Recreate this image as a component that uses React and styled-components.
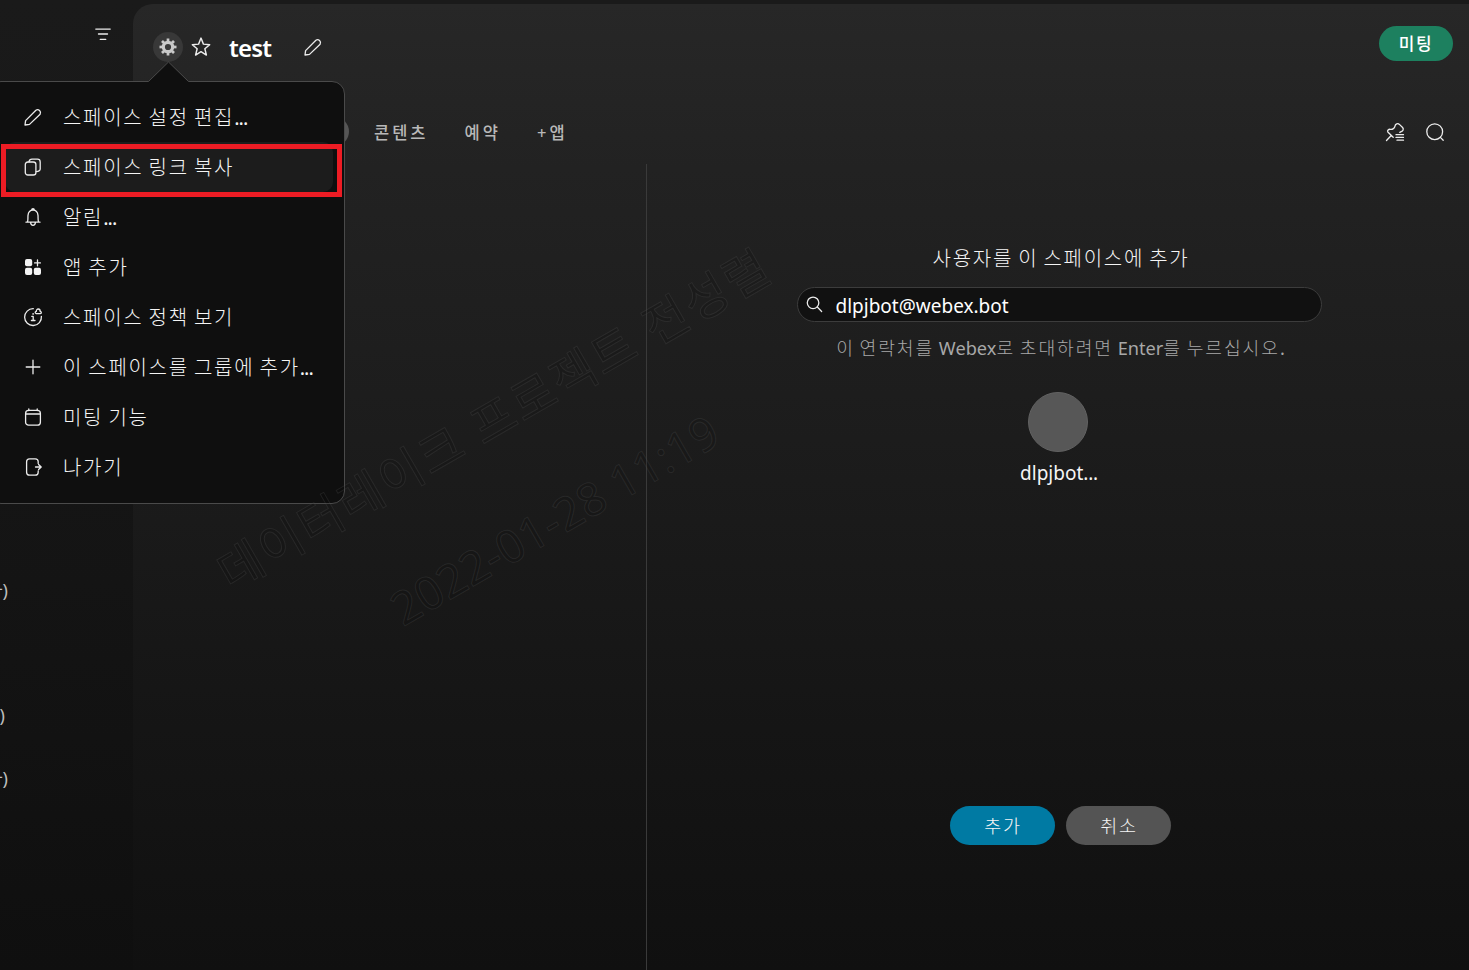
import React from 'react';
import styled, { createGlobalStyle, css } from 'styled-components';

const GlobalStyle = createGlobalStyle`
  * { box-sizing: border-box; }
  html, body, #root { height: 100%; }
  body {
    margin: 0;
    overflow: hidden;
    background: #191919;
    color: #f5f5f5;
    font-family: 'Noto Sans', 'Noto Sans CJK KR', sans-serif;
  }
  button, input { font: inherit; color: inherit; border: 0; padding: 0; background: none; }
`;

const Window = styled.div`
  position: relative;
  display: flex;
  width: 100%;
  height: 970px;
  padding-top: 4px;
  overflow: hidden;
  background: linear-gradient(#1a1a1a, #191919 15%, #141414 60%, #0f0f0f);
`;

const Sidebar = styled.aside`
  display: flex;
  flex-direction: column;
  width: 133px;
  flex: none;
`;

const FilterBar = styled.div`
  display: flex;
  justify-content: flex-end;
  padding: 21px 21px 0 0;
  height: 564px;
`;

const ListTail = styled.div`
  height: ${(p) => p.$height}px;
  margin-left: ${(p) => p.$offset}px;
  font-size: 18px;
  line-height: 44px;
  color: #bdbdbd;
  white-space: nowrap;
`;

const Main = styled.main`
  display: flex;
  flex-direction: column;
  flex: 1;
  border-top-left-radius: 20px;
  background: linear-gradient(#272727, #222 17%, #1c1c1c 45%, #151515 75%, #101010);
`;

const Header = styled.header`
  display: flex;
  align-items: center;
  height: 86px;
  padding: 0 16px 0 20px;
`;

const SettingsButton = styled.button`
  display: grid;
  place-items: center;
  width: 30px;
  height: 30px;
  border-radius: 50%;
  background: #383838;
`;

const StarButton = styled.button`
  display: grid;
  margin-left: 6.5px;
`;

const Title = styled.h1`
  width: 74px;
  margin: 2px 0 0 17.5px;
  font-size: 24px;
  font-weight: 600;
  line-height: 30px;
  letter-spacing: -0.8px;
  color: #fff;
`;

const EditButton = styled.button`
  display: grid;
`;

const MeetButton = styled.button`
  width: 74px;
  height: 35px;
  margin: -7px 0 0 auto;
  border-radius: 18px;
  background: #1d805f;
  font-size: 17px;
  font-weight: 500;
  line-height: 35px;
  color: #fff;
`;

const TabBar = styled.nav`
  display: flex;
  align-items: center;
  height: 74px;
  padding: 0 23px 0 156px;
`;

const ActiveTab = styled.span`
  width: 60px;
  height: 29px;
  margin-top: 9px;
  border-radius: 15px;
  background: #555;
`;

const Tab = styled.span`
  margin: 11px 0 0 ${(p) => p.$gap}px;
  font-size: 16.5px;
  font-weight: 500;
  line-height: 24px;
  color: #b8b8b8;
  white-space: nowrap;
`;

const PlusSign = styled.span`
  margin-right: 3px;
`;

const TabTools = styled.div`
  display: flex;
  gap: 20px;
  margin: 10px 1px 0 auto;
`;

const Body = styled.div`
  display: flex;
  flex: 1;
`;

const Conversation = styled.section`
  width: 514px;
  border-right: 1px solid #3a3a3a;
`;

const AddPanel = styled.section`
  display: flex;
  flex-direction: column;
  align-items: center;
  flex: 1;
  padding: 81px 0 0 2px;
`;

const PanelTitle = styled.h2`
  margin: 0;
  padding-left: 4px;
  font-size: 20px;
  font-weight: 400;
  line-height: 28px;
  white-space: nowrap;
`;

const SearchField = styled.label`
  display: flex;
  align-items: center;
  width: 525px;
  height: 35px;
  margin-top: 14px;
  padding: 0 8px;
  border: 1px solid #3c3c3c;
  border-radius: 18px;
  background: #111;
`;

const SearchInput = styled.input`
  flex: 1;
  margin: 2px 0 0 13px;
  outline: none;
  font-size: 19px;
  color: #fff;
`;

const Hint = styled.p`
  margin: 12px 0 0;
  padding-left: 3px;
  font-size: 18.2px;
  line-height: 28px;
  color: #a8a8a8;
  white-space: nowrap;
`;

const Avatar = styled.div`
  width: 60px;
  height: 60px;
  margin: 30px 2px 0 0;
  border: 1px solid #626262;
  border-radius: 50%;
  background: #575757;
`;

const ContactName = styled.div`
  margin-top: 7px;
  font-size: 19px;
  line-height: 28px;
`;

const Actions = styled.div`
  display: flex;
  gap: 11px;
  margin-top: 319px;
  padding-left: 2px;
`;

const ActionButton = styled.button`
  width: 105px;
  height: 39px;
  padding-left: 2px;
  border-radius: 20px;
  background: ${(p) => (p.$primary ? '#007aa3' : '#545454')};
  font-size: 18.5px;
  line-height: 39px;
`;

const Popover = styled.div`
  position: absolute;
  top: 81px;
  left: -12px;
  width: 357px;
  height: 423px;
  padding: 10px 11px 0 16px;
  border: 1px solid #4a4a4a;
  border-radius: 13px;
  background: #0f0f0f;
`;

const PopoverArrow = styled.svg`
  position: absolute;
  top: -21px;
  left: 159px;
`;

const MenuItem = styled.div`
  display: flex;
  align-items: center;
  height: 50px;
  padding-left: 18px;
  border-radius: 10px;
  ${(p) => p.$hovered && css`background: #1c1c1c;`}
`;

const MenuLabel = styled.span`
  margin: 2px 0 0 20px;
  font-size: 20px;
  line-height: 28px;
  white-space: nowrap;
`;

const Highlight = styled.div`
  position: absolute;
  top: 144px;
  left: 1px;
  width: 341px;
  height: 53px;
  border: 5px solid #ed1c24;
`;

const Watermark = styled.div`
  position: absolute;
  left: ${(p) => p.$x}px;
  top: ${(p) => p.$y}px;
  transform: translate(-50%, -50%) rotate(-30deg);
  font-size: ${(p) => p.$size}px;
  line-height: 1;
  letter-spacing: ${(p) => p.$spacing || 0}px;
  white-space: nowrap;
  color: rgba(0, 0, 0, 0.1);
  -webkit-text-stroke: 1px rgba(84, 84, 84, 0.26);
  pointer-events: none;
`;

const Hangul = styled.span`
  font-weight: ${(p) => p.$weight};
  letter-spacing: ${(p) => p.$spacing}px;
`;

const Dots = styled.span`
  letter-spacing: ${(p) => (p.$wide ? '-0.2px' : '-1px')};
`;

function Label({ text, spacing = 1.7, weight = 300 }) {
  return text.split(/([가-힣]+|\.\.\.)/).map((part, i) => {
    if (/[가-힣]/.test(part)) return <Hangul key={i} $spacing={spacing} $weight={weight}>{part}</Hangul>;
    if (part === '...') return <Dots key={i}>{part}</Dots>;
    return part;
  });
}

const Icon = styled.svg.attrs({ viewBox: '0 0 20 20', fill: 'none' })`
  display: block;
  width: ${(p) => p.$size || 20}px;
  height: ${(p) => p.$size || 20}px;
  stroke: #ececec;
  stroke-width: 1.3;
  stroke-linecap: round;
  stroke-linejoin: round;
`;

const PencilIcon = () => (
  <Icon>
    <path d="M2 18 L2.6 13.6 L12.9 3.2 A3 3 0 0 1 17.1 7.2 L6.5 17.4 Z" />
  </Icon>
);

const CopyIcon = () => (
  <Icon>
    <rect x="2.3" y="5" width="10.6" height="13" rx="2.6" />
    <path d="M6 4.8 Q6.4 2.2 9 2.2 H14.5 Q17.2 2.2 17.2 4.9 V12 Q17.2 14.3 13.2 14.7" />
  </Icon>
);

const BellIcon = () => (
  <Icon>
    <path d="M3 15.2 H17 M4.5 15 C5.2 12.8 4.8 10.6 5 8.4 C5.3 5.4 7 3.2 10 3.2 C13 3.2 14.7 5.4 15 8.4 C15.2 10.6 14.8 12.8 15.5 15 M8.6 3 C8.8 1.3 11.2 1.3 11.4 3 M7.6 15.5 C7.8 19.2 12.2 19.2 12.4 15.5" />
  </Icon>
);

const AppsIcon = () => (
  <Icon>
    <g fill="#f4f4f4" stroke="none">
      <rect x="2" y="2" width="7.2" height="7.2" rx="1.9" />
      <rect x="2" y="10.8" width="7.2" height="7.2" rx="1.9" />
      <rect x="10.8" y="10.8" width="7.2" height="7.2" rx="1.9" />
    </g>
    <path d="M14.5 3 V8.8 M11.6 5.9 H17.4" />
  </Icon>
);

const PolicyIcon = () => (
  <Icon>
    <path d="M10.3 1.7 A8.4 8.4 0 1 0 18.4 9.3" />
    <path d="M8.8 9.4 H10.2 V13.4 M8.4 13.5 H12" />
    <circle cx="10" cy="6.9" r="0.5" fill="#ececec" strokeWidth="0.6" />
    <path d="M13.3 6.6 C11.6 6.4 12 4.4 13.3 4.4 C13.2 1.2 17.2 1.2 17.2 4.4 C18.6 4.4 18.8 6.4 17.3 6.6 Z" />
  </Icon>
);

const PlusIcon = () => (
  <Icon><path d="M10 3.2 V16.8 M3.2 10 H16.8" /></Icon>
);

const CalendarIcon = () => (
  <Icon>
    <rect x="2.6" y="3.4" width="14.8" height="14.8" rx="3" />
    <path d="M2.7 7 H17.3 M5.8 1.9 V3.5 M14.2 1.9 V3.5" />
  </Icon>
);

const LeaveIcon = () => (
  <Icon>
    <path d="M15.2 6.4 V4.8 Q15.2 1.8 12.2 1.8 H6.6 Q3.6 1.8 3.6 4.8 V15.2 Q3.6 18.2 6.6 18.2 H12.2 Q15.2 18.2 15.2 15.2 V13.8 M12.5 10 H18 M15.6 7.5 L18.2 10 L15.6 12.5" />
  </Icon>
);

const StarIcon = () => (
  <Icon $size={22}>
    <path d="M10 1.9 L12.2 7.4 L17.9 7.9 L13.5 11.6 L14.9 17.3 L10 14.2 L5.1 17.3 L6.5 11.6 L2.1 7.9 L7.8 7.4 Z" />
  </Icon>
);

const GearIcon = () => (
  <Icon>
    <circle cx="10" cy="10" r="4.7" strokeWidth="3.2" stroke="#c9c9c9" />
    {[0, 45, 90, 135, 180, 225, 270, 315].map((a) => (
      <path key={a} d="M10 4.4 V1.5" strokeWidth="2.7" stroke="#c9c9c9" strokeLinecap="butt" transform={`rotate(${a} 10 10)`} />
    ))}
  </Icon>
);

const FilterIcon = () => (
  <Icon $size={18}><path d="M2 4.5 H18 M5 10 H15 M7 16 H13" strokeWidth="1.5" /></Icon>
);

const SearchIcon = ({ size }) => (
  <Icon $size={size}>
    <circle cx="9.7" cy="9.7" r="7.9" />
    <path d="M15.4 15.4 L18.2 18.2" />
  </Icon>
);

const SmallSearchIcon = () => (
  <Icon $size={17}>
    <circle cx="8.3" cy="8" r="6.8" strokeWidth="1.5" />
    <path d="M13.3 13 L18.4 18.2" strokeWidth="1.5" />
  </Icon>
);

const PinListIcon = () => (
  <Icon>
    <path d="M1.5 18.5 L6.2 13.5 M8.2 15.3 L2.8 10 C2 8.6 3.6 7 5.3 7.3 C7.6 7.8 9.6 6 9.9 4.3 C10.3 1.9 12.8 1 14.4 2.4 L17.6 5.5 C19 7.2 18 9 16.2 9.6 L14.8 10.4" />
    <path d="M11 12.7 H18.5 M11 15.4 H18.5 M12 18.2 H18.5" />
  </Icon>
);

const menu = [
  { icon: PencilIcon, text: '스페이스 설정 편집...' },
  { icon: CopyIcon, text: '스페이스 링크 복사', hovered: true },
  { icon: BellIcon, text: '알림...' },
  { icon: AppsIcon, text: '앱 추가' },
  { icon: PolicyIcon, text: '스페이스 정책 보기' },
  { icon: PlusIcon, text: '이 스페이스를 그룹에 추가...' },
  { icon: CalendarIcon, text: '미팅 기능' },
  { icon: LeaveIcon, text: '나가기' },
];

export default function App() {
  return (
    <>
      <GlobalStyle />
      <Window>
        <Sidebar>
          <FilterBar><FilterIcon /></FilterBar>
          <ListTail $height={125} $offset={-14}>자)</ListTail>
          <ListTail $height={63} $offset={-0.5}>)</ListTail>
          <ListTail $height={63} $offset={-14}>자)</ListTail>
        </Sidebar>
        <Main>
          <Header>
            <SettingsButton><GearIcon /></SettingsButton>
            <StarButton><StarIcon /></StarButton>
            <Title>test</Title>
            <EditButton><PencilIcon /></EditButton>
            <MeetButton><Label text="미팅" weight={500} /></MeetButton>
          </Header>
          <TabBar>
            <ActiveTab />
            <Tab $gap={25}><Label text="콘텐츠" spacing={3} weight={500} /></Tab>
            <Tab $gap={36}><Label text="예약" spacing={3} weight={500} /></Tab>
            <Tab $gap={36}><PlusSign>+</PlusSign><Label text="앱" spacing={3} weight={500} /></Tab>
            <TabTools><PinListIcon /><SearchIcon size={20} /></TabTools>
          </TabBar>
          <Body>
            <Conversation />
            <AddPanel>
              <PanelTitle><Label text="사용자를 이 스페이스에 추가" /></PanelTitle>
              <SearchField>
                <SmallSearchIcon />
                <SearchInput defaultValue="dlpjbot@webex.bot" />
              </SearchField>
              <Hint><Label text="이 연락처를 Webex로 초대하려면 Enter를 누르십시오." spacing={1.9} /></Hint>
              <Avatar />
              <ContactName>dlpjbot<Dots $wide>...</Dots></ContactName>
              <Actions>
                <ActionButton $primary><Label text="추가" /></ActionButton>
                <ActionButton><Label text="취소" /></ActionButton>
              </Actions>
            </AddPanel>
          </Body>
        </Main>
        <Popover>
          <PopoverArrow width="42" height="23" viewBox="0 0 42 23">
            <path d="M0.5 23 V20.5 L20.5 1 L40.5 20.5 V23 Z" fill="#0f0f0f" />
            <path d="M0.5 20.5 L20.5 1 L40.5 20.5" fill="none" stroke="#4a4a4a" />
          </PopoverArrow>
          {menu.map(({ icon: ItemIcon, text, hovered }) => (
            <MenuItem key={text} $hovered={hovered}>
              <ItemIcon />
              <MenuLabel><Label text={text} /></MenuLabel>
            </MenuItem>
          ))}
        </Popover>
        <Highlight />
        <Watermark $x={494} $y={419} $size={48} $spacing={2}>데이터레이크 프로젝트 전성렬</Watermark>
        <Watermark $x={554} $y={519} $size={46}>2022-01-28 11:19</Watermark>
      </Window>
    </>
  );
}
